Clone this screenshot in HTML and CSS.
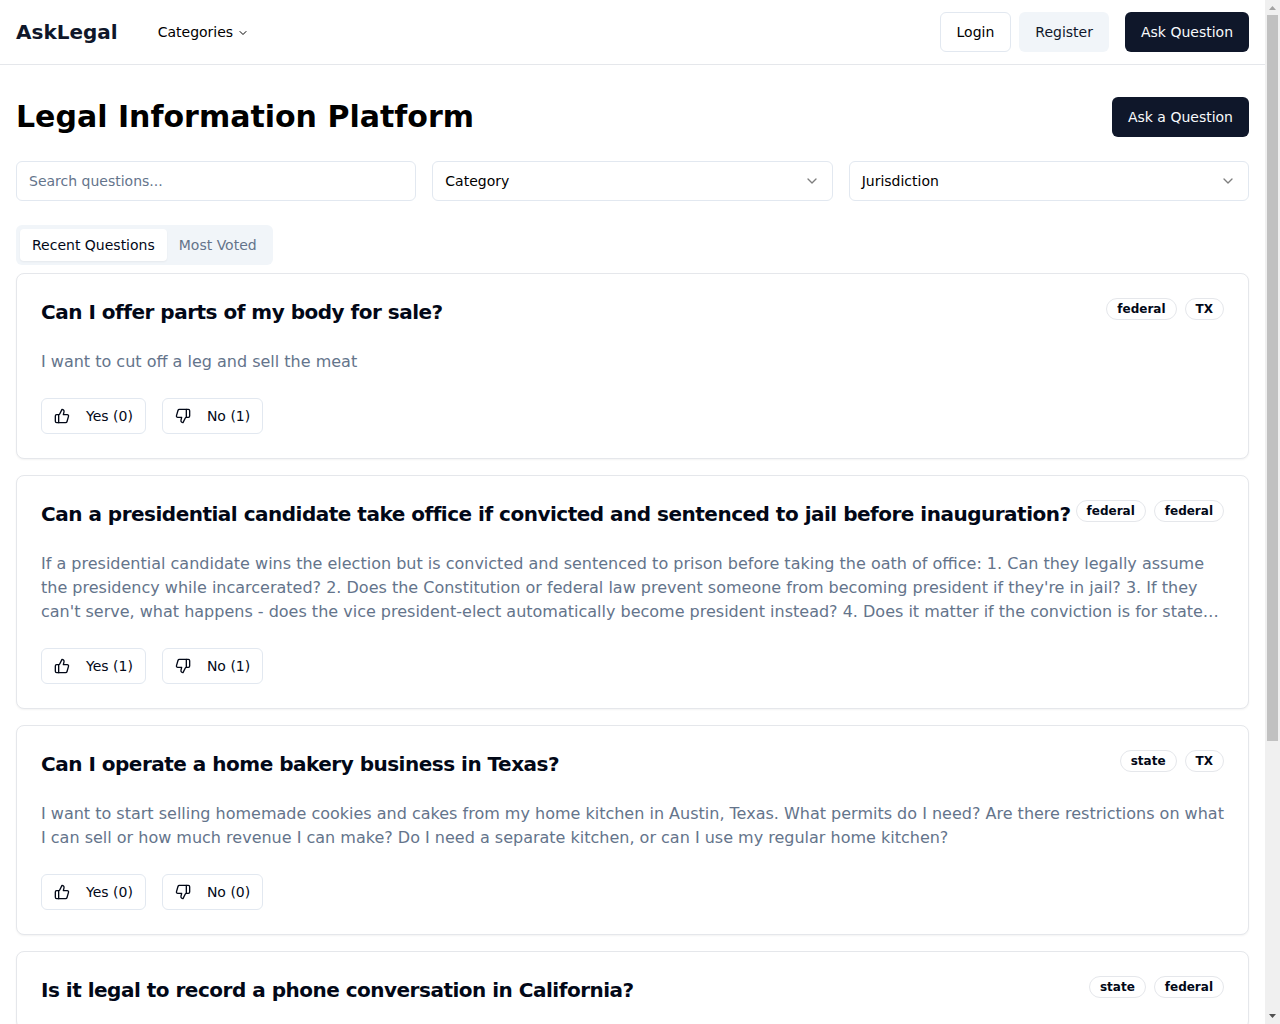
FILE: index.html
```html
<!DOCTYPE html>
<html lang="en">
<head>
<meta charset="utf-8">
<meta name="viewport" content="width=device-width, initial-scale=1">
<title>AskLegal</title>
<link rel="stylesheet" href="styles.css">
</head>
<body>
<svg class="sprite" aria-hidden="true">
  <symbol id="chevron" viewBox="0 0 24 24"><path d="m6 9 6 6 6-6"/></symbol>
  <symbol id="thumb-up" viewBox="0 0 24 24"><path d="M7 10v12"/><path d="M15 5.88 14 10h5.83a2 2 0 0 1 1.92 2.56l-2.33 8A2 2 0 0 1 17.5 22H4a2 2 0 0 1-2-2v-8a2 2 0 0 1 2-2h2.76a2 2 0 0 0 1.79-1.11L12 2a3.13 3.13 0 0 1 3 3.88Z"/></symbol>
  <symbol id="thumb-down" viewBox="0 0 24 24"><path d="M17 14V2"/><path d="M9 18.12 10 14H4.17a2 2 0 0 1-1.92-2.56l2.33-8A2 2 0 0 1 6.5 2H20a2 2 0 0 1 2 2v8a2 2 0 0 1-2 2h-2.76a2 2 0 0 0-1.79 1.11L12 22a3.13 3.13 0 0 1-3-3.88Z"/></symbol>
</svg>
<div class="content">
<header class="topbar">
  <nav class="topbar-nav">
    <a class="brand" href="#">AskLegal</a>
    <button class="menu-button" type="button">Categories <svg class="icon icon-small"><use href="#chevron"/></svg></button>
  </nav>
  <div class="topbar-actions">
    <div class="account">
      <a class="btn btn-outline" href="#">Login</a>
      <a class="btn btn-secondary" href="#">Register</a>
    </div>
    <a class="btn btn-primary" href="#">Ask Question</a>
  </div>
</header>
<main class="page">
  <div class="page-head">
    <h1>Legal Information Platform</h1>
    <a class="btn btn-primary" href="#">Ask a Question</a>
  </div>
  <form class="filters">
    <input class="field" type="text" placeholder="Search questions..." aria-label="Search questions">
    <div class="select">
      <select class="field" aria-label="Category"><option>Category</option></select>
      <svg class="icon select-icon"><use href="#chevron"/></svg>
    </div>
    <div class="select">
      <select class="field" aria-label="Jurisdiction"><option>Jurisdiction</option></select>
      <svg class="icon select-icon"><use href="#chevron"/></svg>
    </div>
  </form>
  <div class="tabs" role="tablist">
    <button class="tab tab-active" type="button" role="tab" aria-selected="true">Recent Questions</button>
    <button class="tab" type="button" role="tab" aria-selected="false">Most Voted</button>
  </div>
  <div class="questions">
    <article class="card">
      <div class="card-head">
        <h2>Can I offer parts of my body for sale?</h2>
        <div class="badges"><span class="badge">federal</span><span class="badge">TX</span></div>
      </div>
      <p class="summary">I want to cut off a leg and sell the meat</p>
      <div class="votes">
        <button class="btn vote" type="button"><svg class="icon"><use href="#thumb-up"/></svg>Yes (0)</button>
        <button class="btn vote" type="button"><svg class="icon"><use href="#thumb-down"/></svg>No (1)</button>
      </div>
    </article>
    <article class="card">
      <div class="card-head">
        <h2>Can a presidential candidate take office if convicted and sentenced to jail before inauguration?</h2>
        <div class="badges"><span class="badge">federal</span><span class="badge">federal</span></div>
      </div>
      <p class="summary">If a presidential candidate wins the election but is convicted and sentenced to prison before taking the oath of office: 1. Can they legally assume the presidency while incarcerated? 2. Does the Constitution or federal law prevent someone from becoming president if they're in jail? 3. If they can't serve, what happens - does the vice president-elect automatically become president instead? 4. Does it matter if the conviction is for state…</p>
      <div class="votes">
        <button class="btn vote" type="button"><svg class="icon"><use href="#thumb-up"/></svg>Yes (1)</button>
        <button class="btn vote" type="button"><svg class="icon"><use href="#thumb-down"/></svg>No (1)</button>
      </div>
    </article>
    <article class="card">
      <div class="card-head">
        <h2>Can I operate a home bakery business in Texas?</h2>
        <div class="badges"><span class="badge">state</span><span class="badge">TX</span></div>
      </div>
      <p class="summary">I want to start selling homemade cookies and cakes from my home kitchen in Austin, Texas. What permits do I need? Are there restrictions on what I can sell or how much revenue I can make? Do I need a separate kitchen, or can I use my regular home kitchen?</p>
      <div class="votes">
        <button class="btn vote" type="button"><svg class="icon"><use href="#thumb-up"/></svg>Yes (0)</button>
        <button class="btn vote" type="button"><svg class="icon"><use href="#thumb-down"/></svg>No (0)</button>
      </div>
    </article>
    <article class="card">
      <div class="card-head">
        <h2>Is it legal to record a phone conversation in California?</h2>
        <div class="badges"><span class="badge">state</span><span class="badge">federal</span></div>
      </div>
    </article>
  </div>
</main>
</div>
<div class="scrollbar" aria-hidden="true">
  <svg class="scroll-arrow arrow-off" viewBox="0 0 15 15"><path d="M4 10 7.500 6 11 10Z"/></svg>
  <div class="scroll-track"><div class="scroll-thumb"></div></div>
  <svg class="scroll-arrow" viewBox="0 0 15 15"><path d="M4 5 7.500 9 11 5Z"/></svg>
</div>
</body>
</html>
```
FILE: styles.css
```css
* { box-sizing: border-box; }

body {
  display: flex;
  height: 100vh;
  margin: 0;
  overflow: hidden;
  background: #fff;
  color: #000;
  font: 14px/20px "DejaVu Sans", sans-serif;
}

h1, h2, p { margin: 0; }
a { color: inherit; text-decoration: none; }
button, input, select { font: inherit; color: inherit; }

.sprite { display: none; }

.content {
  flex: 1;
  min-width: 0;
  overflow-y: auto;
  scrollbar-width: none;
}
.scrollbar {
  display: flex;
  flex-direction: column;
  flex: none;
  width: 15px;
  background: #f0f0f0;
}
.scroll-arrow { flex: none; width: 15px; height: 15px; fill: #505050; }
.arrow-off { fill: #a3a3a3; }
.scroll-track { flex: 1; padding: 0 2px; }
.scroll-thumb { height: 73%; background: #c1c1c1; }

.icon {
  width: 16px;
  height: 16px;
  flex: none;
  fill: none;
  stroke: currentColor;
  stroke-width: 2;
  stroke-linecap: round;
  stroke-linejoin: round;
}
.icon-small { width: 12px; height: 12px; }

.topbar {
  display: flex;
  justify-content: space-between;
  align-items: center;
  padding: 12px 16px;
  border-bottom: 1px solid #e5e7eb;
}
.topbar-nav { display: flex; align-items: center; gap: 24px; }
.brand { font-size: 20px; line-height: 28px; font-weight: 700; color: #0f172a; }
.menu-button {
  display: flex;
  align-items: center;
  gap: 4px;
  height: 40px;
  padding: 0 16px;
  border: 0;
  background: none;
}
.menu-button .icon { margin-top: 2px; }
.topbar-actions { display: flex; gap: 16px; }
.account { display: flex; gap: 8px; }

.btn {
  display: inline-flex;
  align-items: center;
  justify-content: center;
  height: 40px;
  padding: 0 16px;
  border: 0;
  border-radius: 6px;
  white-space: nowrap;
}
.btn-primary { background: #0f172a; color: #f8fafc; }
.btn-secondary { background: #f1f5f9; color: #0f172a; }
.btn-outline { border: 1px solid #e2e8f0; background: #fff; }

.page { padding: 32px 16px; }
.page-head {
  display: flex;
  justify-content: space-between;
  align-items: center;
  margin-bottom: 24px;
}
.page-head h1 { font-size: 30px; line-height: 36px; font-weight: 700; }

.filters {
  display: grid;
  grid-template-columns: repeat(3, minmax(0, 1fr));
  gap: 16px;
  margin-bottom: 24px;
}
.field {
  width: 100%;
  height: 40px;
  padding: 0 12px;
  border: 1px solid #e2e8f0;
  border-radius: 6px;
  background: #fff;
  appearance: none;
}
.field::placeholder { color: #64748b; opacity: 1; }
/* The indent keeps the overhang of a leading "J" from being clipped */
select.field { padding-left: 8px; text-indent: 4px; }
.select { display: grid; align-items: center; }
.select > * { grid-area: 1 / 1; }
.select-icon {
  justify-self: end;
  margin-right: 13px;
  opacity: 0.5;
  pointer-events: none;
}

.tabs {
  display: inline-flex;
  padding: 4px;
  border-radius: 6px;
  background: #f1f5f9;
  vertical-align: top;
}
.tab {
  padding: 6px 12px;
  border: 0;
  border-radius: 4px;
  background: none;
  color: #64748b;
}
.tab-active {
  background: #fff;
  color: #020817;
  box-shadow: 0 1px 2px rgb(0 0 0 / 5%);
}

.questions { display: grid; gap: 16px; margin-top: 8px; }
.card {
  display: grid;
  gap: 24px;
  padding: 24px;
  border: 1px solid #e5e7eb;
  border-radius: 8px;
  background: #fff;
  color: #020817;
  box-shadow: 0 1px 2px rgb(0 0 0 / 5%);
}
.card-head { display: flex; justify-content: space-between; align-items: flex-start; }
.card-head h2 {
  font-size: 20px;
  line-height: 28px;
  font-weight: 600;
  letter-spacing: -0.025em;
}
.badges { display: flex; gap: 8px; }
.badge {
  padding: 2px 10px;
  border: 1px solid #e5e7eb;
  border-radius: 11px;
  font-size: 12px;
  line-height: 16px;
  font-weight: 600;
}
.summary { font-size: 16px; line-height: 24px; color: #64748b; }
.votes { display: flex; gap: 16px; }
.vote {
  gap: 16px;
  height: 36px;
  padding: 0 12px;
  border: 1px solid #e2e8f0;
  background: #fff;
}
```
